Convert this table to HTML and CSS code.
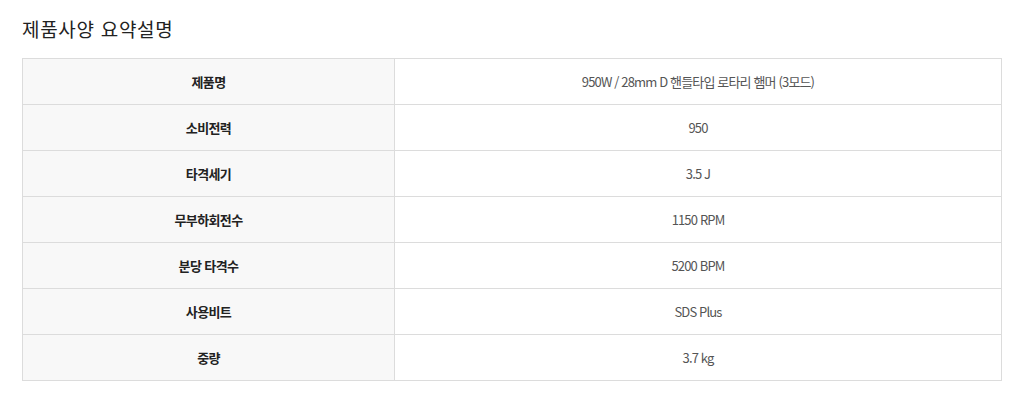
FILE: index.html
```html
<!DOCTYPE html>
<html lang="ko">
<head>
<meta charset="utf-8">
<title>제품사양 요약설명</title>
<link rel="stylesheet" href="styles.css">
</head>
<body>
<div class="wrap">
  <h2 class="title">제품사양 요약설명</h2>
  <table class="spec">
    <tbody>
      <tr><th>제품명</th><td>950W / 28mm D 핸들타입 로타리 햄머 (3모드)</td></tr>
      <tr><th>소비전력</th><td>950</td></tr>
      <tr><th>타격세기</th><td>3.5 J</td></tr>
      <tr><th>무부하회전수</th><td>1150 RPM</td></tr>
      <tr><th>분당 타격수</th><td>5200 BPM</td></tr>
      <tr><th>사용비트</th><td>SDS Plus</td></tr>
      <tr><th>중량</th><td>3.7 kg</td></tr>
    </tbody>
  </table>
</div>
</body>
</html>
```
FILE: styles.css
```css
html, body {
  margin: 0;
  padding: 0;
  background: #fff;
}
body {
  font-family: "Noto Sans CJK KR", "Noto Sans", sans-serif;
  color: #333;
}
.wrap {
  padding: 16px 22px 0 22px;
}
.title {
  margin: 0 0 17px 0;
  font-size: 19px;
  font-weight: 400;
  line-height: 25px;
  color: #222;
  letter-spacing: 0.7px;
}
.spec {
  width: 980px;
  border-collapse: collapse;
  border: 1px solid #dcdcdc;
  table-layout: fixed;
}
.spec th, .spec td {
  height: 45px;
  padding: 0;
  border: 1px solid #dcdcdc;
  text-align: center;
  font-size: 13px;
  line-height: 20px;
}
.spec th {
  width: 371px;
  background: #f8f8f8;
  font-weight: 700;
  color: #222;
  letter-spacing: -0.6px;
}
.spec td {
  background: #fff;
  font-weight: 400;
  color: #555;
  letter-spacing: -0.85px;
}
```
